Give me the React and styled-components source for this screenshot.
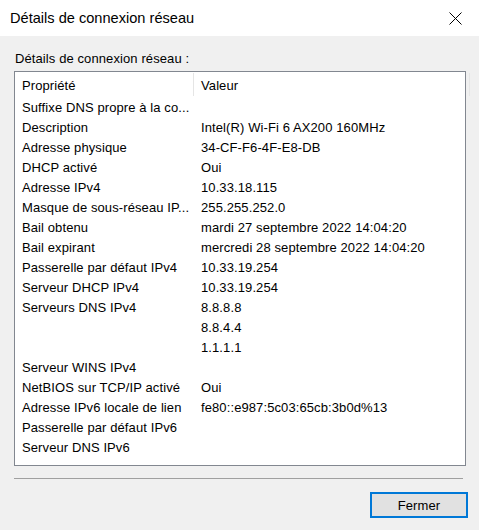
import React from 'react';
import styled, { createGlobalStyle } from 'styled-components';

const Global = createGlobalStyle`
  html, body {
    margin: 0;
    padding: 0;
    background: #f0f0f0;
  }
  body {
    font-family: "Liberation Sans", Arial, sans-serif;
    color: #000;
  }
`;

const Window = styled.div`
  width: 479px;
  height: 530px;
  display: flex;
  flex-direction: column;
  background: #f0f0f0;
  overflow: hidden;
`;

const TitleBar = styled.div`
  height: 36px;
  flex: none;
  background: #fff;
  display: flex;
  align-items: center;
  justify-content: space-between;
  padding-left: 10px;
`;

const Title = styled.div`
  font-size: 14.6px;
  color: #000;
`;

const CloseButton = styled.div`
  width: 46px;
  height: 36px;
  display: flex;
  align-items: center;
  justify-content: center;
  margin-right: 1px;
`;

const Body = styled.div`
  flex: 1;
  display: flex;
  flex-direction: column;
  padding: 15px 12px 0 14px;
  font-size: 13px;
  letter-spacing: 0.1px;
`;

const Label = styled.div`
  line-height: 15px;
  padding-left: 1px;
  margin-bottom: 5px;
`;

const ListBox = styled.div`
  width: 450px;
  height: 393px;
  border: 1px solid #828790;
  background: #fff;
  display: flex;
  flex-direction: column;
`;

const Header = styled.div`
  height: 25px;
  display: grid;
  grid-template-columns: 179px 1fr 3px;
`;

const HeadCell = styled.div`
  display: flex;
  align-items: center;
  padding-left: 7px;
  padding-top: 1px;
  border-right: ${p => (p.$divider ? '1px solid #e5e5e5' : 'none')};
  margin: 1px 0 1px;
`;

const Row = styled.div`
  height: 20px;
  display: grid;
  grid-template-columns: 179px 1fr;
  align-items: center;
`;

const Cell = styled.div`
  padding-left: 7px;
  white-space: nowrap;
  overflow: hidden;
`;

const Separator = styled.div`
  width: 449px;
  height: 1px;
  background: #a0a0a0;
  margin-top: 12px;
`;

const Footer = styled.div`
  display: flex;
  justify-content: flex-end;
  margin-top: 13px;
`;

const Button = styled.button`
  width: 98px;
  height: 26px;
  background: #e1e1e1;
  border: 2px solid #0078d7;
  font-family: "Liberation Sans", Arial, sans-serif;
  font-size: 13px;
  letter-spacing: 0.1px;
  color: #000;
  padding: 0;
  margin-right: -1px;
`;

const rows = [
  ['Suffixe DNS propre à la co...', ''],
  ['Description', 'Intel(R) Wi-Fi 6 AX200 160MHz'],
  ['Adresse physique', '34-CF-F6-4F-E8-DB'],
  ['DHCP activé', 'Oui'],
  ['Adresse IPv4', '10.33.18.115'],
  ['Masque de sous-réseau IP...', '255.255.252.0'],
  ['Bail obtenu', 'mardi 27 septembre 2022 14:04:20'],
  ['Bail expirant', 'mercredi 28 septembre 2022 14:04:20'],
  ['Passerelle par défaut IPv4', '10.33.19.254'],
  ['Serveur DHCP IPv4', '10.33.19.254'],
  ['Serveurs DNS IPv4', '8.8.8.8'],
  ['', '8.8.4.4'],
  ['', '1.1.1.1'],
  ['Serveur WINS IPv4', ''],
  ['NetBIOS sur TCP/IP activé', 'Oui'],
  ['Adresse IPv6 locale de lien', 'fe80::e987:5c03:65cb:3b0d%13'],
  ['Passerelle par défaut IPv6', ''],
  ['Serveur DNS IPv6', ''],
];

export default function App() {
  return (
    <Window>
      <Global />
      <TitleBar>
        <Title>Détails de connexion réseau</Title>
        <CloseButton>
          <svg width="13" height="13" viewBox="0 0 13 13">
            <path d="M0.5 0.5 L12.5 12.5 M12.5 0.5 L0.5 12.5" stroke="#000" strokeWidth="1" fill="none" />
          </svg>
        </CloseButton>
      </TitleBar>
      <Body>
        <Label>Détails de connexion réseau :</Label>
        <ListBox>
          <Header>
            <HeadCell $divider>Propriété</HeadCell>
            <HeadCell>Valeur</HeadCell>
            <HeadCell $divider />
          </Header>
          {rows.map((r, i) => (
            <Row key={i}>
              <Cell>{r[0]}</Cell>
              <Cell>{r[1]}</Cell>
            </Row>
          ))}
        </ListBox>
        <Separator />
        <Footer>
          <Button>Fermer</Button>
        </Footer>
      </Body>
    </Window>
  );
}
